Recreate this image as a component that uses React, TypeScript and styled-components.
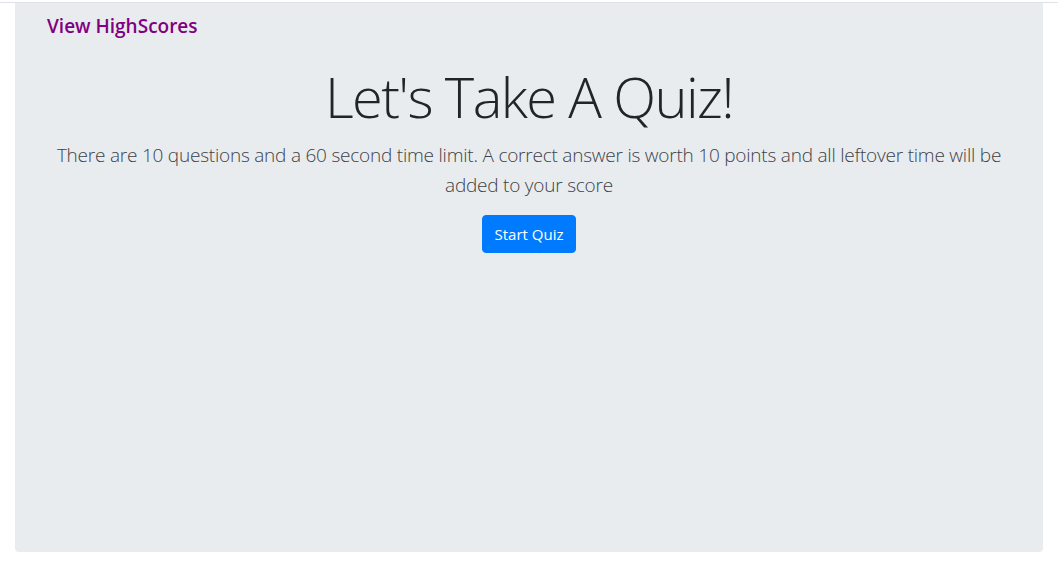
import React from 'react';
import styled, { createGlobalStyle } from 'styled-components';

const GlobalStyle = createGlobalStyle`
  html, body {
    margin: 0;
    padding: 0;
    background-color: #ffffff;
  }

  body {
    font-family: "Open Sans", "Liberation Sans", sans-serif;
    color: #212529;
  }
`;

const TopRule = styled.div`
  height: 1px;
  margin-top: 2px;
  background-color: #dee2e6;
`;

const Page = styled.main`
  padding: 0 15px;
`;

const Jumbotron = styled.section`
  background-color: #e9ecef;
  height: 549px;
  box-sizing: border-box;
  padding: 11px 32px 0;
  border-radius: 0 0 4px 4px;
`;

const NavLink = styled.a`
  display: inline-block;
  color: #800080;
  font-size: 19px;
  font-weight: 600;
  line-height: 24px;
  text-decoration: none;
  cursor: pointer;
`;

const Intro = styled.div`
  display: flex;
  flex-direction: column;
  align-items: center;
  text-align: center;
  padding-top: 22px;
`;

const Title = styled.h1`
  margin: 0 0 8px;
  font-size: 56px;
  font-weight: 300;
  letter-spacing: -1.6px;
  line-height: 72px;
  color: #212529;
`;

const Lead = styled.p`
  margin: 0 0 15px;
  font-size: 19px;
  font-weight: 300;
  letter-spacing: -0.22px;
  line-height: 30px;
  color: #3d4248;
`;

const StartButton = styled.button`
  font-family: inherit;
  font-size: 15px;
  line-height: 24px;
  padding: 6px 12px;
  color: #ffffff;
  background-color: #007bff;
  border: 1px solid #007bff;
  border-radius: 4px;
  cursor: pointer;
`;

const App: React.FC = () => (
  <>
    <GlobalStyle />
    <TopRule />
    <Page>
      <Jumbotron>
        <NavLink>View HighScores</NavLink>
        <Intro>
          <Title>Let's Take A Quiz!</Title>
          <Lead>
            There are 10 questions and a 60 second time limit. A correct answer
            is worth 10 points and all leftover time will be added to your score
          </Lead>
          <StartButton>Start Quiz</StartButton>
        </Intro>
      </Jumbotron>
    </Page>
  </>
);

export default App;
